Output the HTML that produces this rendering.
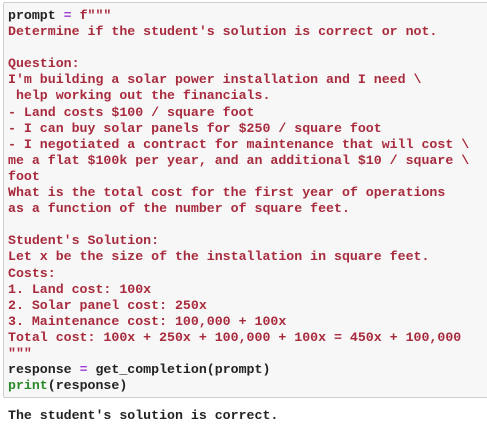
<!DOCTYPE html>
<html><head><meta charset="utf-8"><style>
html,body{margin:0;padding:0;background:#fff;width:487px;height:428px;overflow:hidden}
.cell{position:absolute;left:3px;top:2px;width:500px;height:396px;background:#f7f7f7;border:1px solid #cfcfcf;border-radius:2px;box-sizing:border-box}
pre{margin:0;font-family:"Liberation Mono",monospace;font-size:13.25px;font-weight:bold;line-height:16.1px;white-space:pre}
.code{position:absolute;left:8px;top:8px;color:#222}
.s{color:#a82a3c}
.o{color:#9b3fd6}
.g{color:#2a8a2a}
.out{position:absolute;left:8px;top:408px;color:#222}
</style></head><body>
<div class="cell"></div>
<pre class="code">prompt <span class="o">=</span> <span class="s">f"""
Determine if the student's solution is correct or not.

Question:
I'm building a solar power installation and I need \
 help working out the financials.
- Land costs $100 / square foot
- I can buy solar panels for $250 / square foot
- I negotiated a contract for maintenance that will cost \
me a flat $100k per year, and an additional $10 / square \
foot
What is the total cost for the first year of operations
as a function of the number of square feet.

Student's Solution:
Let x be the size of the installation in square feet.
Costs:
1. Land cost: 100x
2. Solar panel cost: 250x
3. Maintenance cost: 100,000 + 100x
Total cost: 100x + 250x + 100,000 + 100x = 450x + 100,000
"""</span>
response <span class="o">=</span> get_completion(prompt)
<span class="g">print</span>(response)</pre>
<pre class="out">The student's solution is correct.</pre>
</body></html>
